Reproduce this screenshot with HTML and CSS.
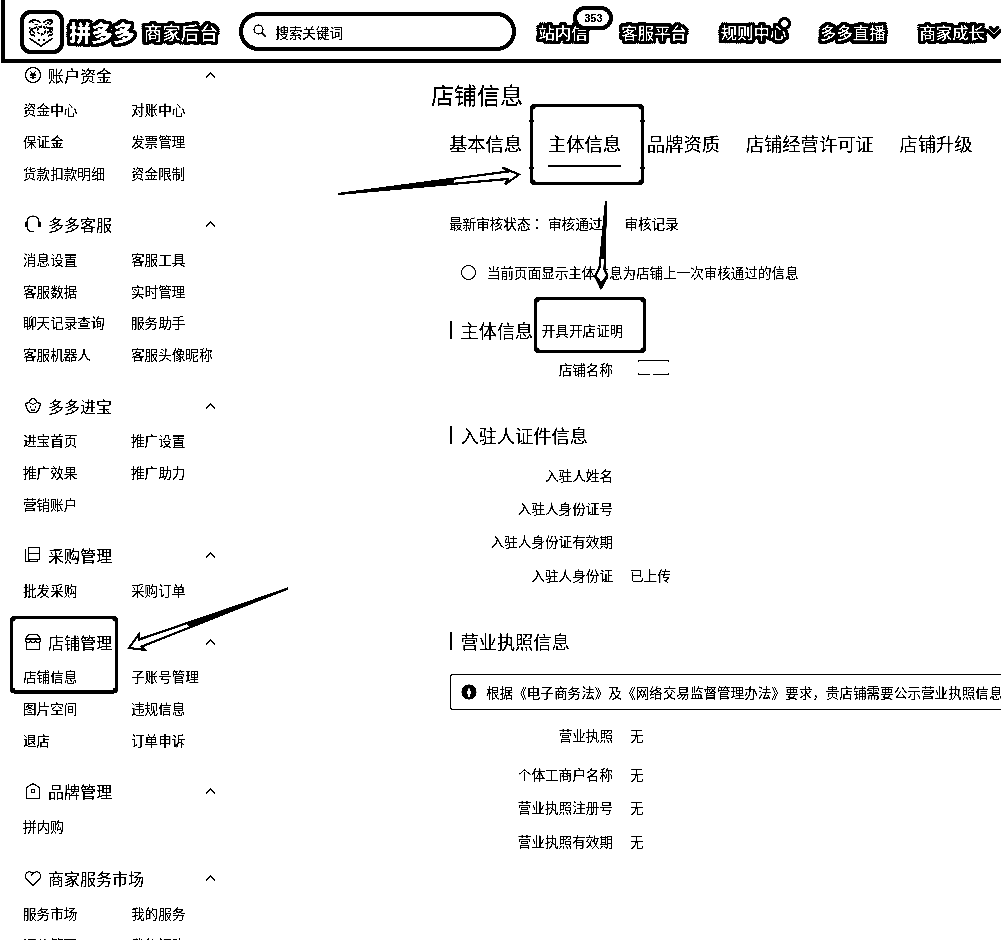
FILE: index.html
```html
<!DOCTYPE html>
<html lang="zh-CN">
<head>
<meta charset="utf-8">
<title>店铺信息</title>
<link rel="stylesheet" href="styles.css">
</head>
<body>
<div class="page">
  <header class="header">
    <svg class="logo" width="44" height="44" viewBox="0 0 44 44" fill="none" stroke="#000"><rect x="2" y="2" width="40" height="40" rx="9" stroke-width="4"/><path d="M9 13c2-4 8-4 12 0M23 13c3-4 8-4 10-1M10 20l7-3M26 17l7 3M9 28l12 8 12-8M10 24l5 2M33 24l-5 2M18 30h2M23 30h2" stroke-width="1.500"/><path d="M9 17l7 8M33 17l-7 8M16 14l4 3M27 14l-4 3M30 10v17M12 12l4 3M9 22h7M27 22h7M27 13h6" stroke-width="1.500" stroke-dasharray="2 1.5"/><circle cx="21.500" cy="20.500" r="4" stroke-width="1.800" stroke-dasharray="3 1"/></svg>
    <span class="brand outlined">拼多多</span>
    <span class="brand-sub outlined">商家后台</span>
    <div class="search">
      <svg width="14" height="14" viewBox="0 0 14 14" fill="none" stroke="#000"><circle cx="5.500" cy="5.500" r="4.500" stroke-width="1.100"/><path d="M9 9l4 4" stroke-width="1.200"/></svg>
      <span>搜索关键词</span>
    </div>
    <nav class="nav">
      <span class="nav-item"><span class="outlined">站内信</span><span class="badge">353</span></span>
      <span class="nav-item outlined">客服平台</span>
      <span class="nav-item"><span class="outlined">规则中心</span><span class="dot"></span></span>
      <span class="nav-item outlined">多多直播</span>
      <span class="nav-item nav-more"><span class="outlined">商家成长</span><svg width="16" height="14" viewBox="0 0 16 14" fill="none"><path d="M3 3l6 6 6-6" stroke="#000" stroke-width="7"/><path d="M3 3l6 6 6-6" stroke="#fff" stroke-width="1.500"/></svg></span>
    </nav>
  </header>

  <div class="body">
    <aside class="sidebar">
      <section class="group">
        <h2 class="group-title"><svg class="icon" viewBox="0 0 18 18"><circle cx="9" cy="9" r="7.500"/><path d="M6 5l3 3.500L12 5M9 8.500v5M6 9h6M6 11.500h6"/></svg><span>账户资金</span><svg class="caret" viewBox="0 0 10 6"><path d="M.5 5.500L5 1l4.500 4.500"/></svg></h2>
        <div class="links"><a>资金中心</a><a>对账中心</a><a>保证金</a><a>发票管理</a><a>货款扣款明细</a><a>资金限制</a></div>
      </section>
      <section class="group">
        <h2 class="group-title"><svg class="icon" viewBox="0 0 18 18"><path d="M3 7a6 6 0 0 1 12 0M3 7v5M15 7v5M3 12c1 3 2 4.500 4 4.500h3"/><path d="M2 7v5M16 7v5" stroke-width="2.200"/></svg><span>多多客服</span><svg class="caret" viewBox="0 0 10 6"><path d="M.5 5.500L5 1l4.500 4.500"/></svg></h2>
        <div class="links"><a>消息设置</a><a>客服工具</a><a>客服数据</a><a>实时管理</a><a>聊天记录查询</a><a>服务助手</a><a>客服机器人</a><a>客服头像昵称</a></div>
      </section>
      <section class="group">
        <h2 class="group-title"><svg class="icon" viewBox="0 0 18 18"><path d="M5 5.500L1.500 6.500L2.500 11L5.500 15.500H12.500L15.500 11L16.500 6.500L13 5.500L9 7.500zM5 5.500L6.500 2.500L9 1.500L11.500 2.500L13 5.500M6.500 9.500v1.500M11.500 9.500v1.500M7 12.500c1 .8 3 .8 4 0"/></svg><span>多多进宝</span><svg class="caret" viewBox="0 0 10 6"><path d="M.5 5.500L5 1l4.500 4.500"/></svg></h2>
        <div class="links"><a>进宝首页</a><a>推广设置</a><a>推广效果</a><a>推广助力</a><a>营销账户</a></div>
      </section>
      <section class="group">
        <h2 class="group-title"><svg class="icon" viewBox="0 0 18 18"><path d="M4.500 1.500h11v12h-11zM4.500 7.500h11M1.500 3v12.500H14M5 14v2M13.500 14v2"/></svg><span>采购管理</span><svg class="caret" viewBox="0 0 10 6"><path d="M.5 5.500L5 1l4.500 4.500"/></svg></h2>
        <div class="links"><a>批发采购</a><a>采购订单</a></div>
      </section>
      <section class="group">
        <h2 class="group-title"><svg class="icon" viewBox="0 0 18 18"><path d="M2.500 9v7.500h13V9M4.500 1.500h9l3 4.500v2l-1.500 1.500h-2L11.500 8 10 9.500H8L6.500 8 5 9.500H3L1.500 8V6zM1.500 6h15"/></svg><span>店铺管理</span><svg class="caret" viewBox="0 0 10 6"><path d="M.5 5.500L5 1l4.500 4.500"/></svg></h2>
        <div class="links"><a>店铺信息</a><a>子账号管理</a><a>图片空间</a><a>违规信息</a><a>退店</a><a>订单申诉</a></div>
      </section>
      <section class="group">
        <h2 class="group-title"><svg class="icon" viewBox="0 0 18 18"><path d="M2.500 16.500V5.500L9 1.500l6.500 4v11zM7.500 7.500h3v3h-3z"/></svg><span>品牌管理</span><svg class="caret" viewBox="0 0 10 6"><path d="M.5 5.500L5 1l4.500 4.500"/></svg></h2>
        <div class="links"><a>拼内购</a></div>
      </section>
      <section class="group">
        <h2 class="group-title"><svg class="icon" viewBox="0 0 18 18"><path d="M9 16.500L2.500 10C-.5 6 3.500 0 9 4.500C14.500 0 18.500 6 15.500 10zM9 4.500L7 6.500"/></svg><span>商家服务市场</span><svg class="caret" viewBox="0 0 10 6"><path d="M.5 5.500L5 1l4.500 4.500"/></svg></h2>
        <div class="links"><a>服务市场</a><a>我的服务</a><a>评价管理</a><a>我的订购</a></div>
      </section>
    </aside>

    <main class="main">
      <h1 class="title">店铺信息</h1>
      <div class="tabs">
        <span class="tab">基本信息</span>
        <span class="tab active">主体信息</span>
        <span class="tab">品牌资质</span>
        <span class="tab">店铺经营许可证</span>
        <span class="tab">店铺升级</span>
      </div>
      <div class="status"><span>最新审核状态<span class="colon" lang="zh-TW">：</span></span><span>审核通过</span><a class="record">审核记录</a></div>
      <div class="note"><span class="ring"></span><span>当前页面显示主体信息为店铺上一次审核通过的信息</span></div>

      <h2 class="section first">主体信息<a class="proof">开具开店证明</a></h2>
      <div class="row"><span class="label">店铺名称</span><svg class="masked" width="32" height="18" viewBox="0 0 32 18" fill="none" stroke="#000"><path d="M.5 3V1.500h30V3M.5 14v1.500H12M15 15.500h15.500V14"/></svg></div>

      <h2 class="section">入驻人证件信息</h2>
      <div class="row"><span class="label">入驻人姓名</span></div>
      <div class="row"><span class="label">入驻人身份证号</span></div>
      <div class="row"><span class="label">入驻人身份证有效期</span></div>
      <div class="row"><span class="label">入驻人身份证</span><span>已上传</span></div>

      <h2 class="section">营业执照信息</h2>
      <div class="notice"><svg width="16" height="16" viewBox="0 0 16 16"><circle cx="8" cy="8" r="7.500"/><path d="M8 3l1 2.500 1.500 3L9 10.500V13H7v-2.500L5.500 8.500l1.500-3z" fill="#fff"/></svg><span>根据《电子商务法》及《网络交易监督管理办法》要求，贵店铺需要公示营业执照信息</span></div>
      <div class="row tall"><span class="label">营业执照</span><span>无</span></div>
      <div class="row"><span class="label">个体工商户名称</span><span>无</span></div>
      <div class="row"><span class="label">营业执照注册号</span><span>无</span></div>
      <div class="row"><span class="label">营业执照有效期</span><span>无</span></div>
    </main>
  </div>

  <svg class="marks" width="1001" height="940" viewBox="0 0 1001 940">
    <g fill="none" stroke="#000" stroke-width="3">
      <rect x="531.500" y="105.500" width="111" height="78" rx="3"/>
      <rect x="535.500" y="298.500" width="109" height="53" rx="3"/>
      <rect x="11.500" y="617.500" width="105" height="74.500" rx="3"/>
    </g>
    <g fill="none" stroke="#000" stroke-width="5" stroke-linecap="round">
      <path d="M533 107h0M641 107h0M533 182h0M641 182h0M537 300h0M643 300h0M537 350h0M643 350h0M13 619h0M115 619h0M13 690.500h0M115 690.500h0"/>
    </g>
    <g fill="none" stroke="#000" stroke-width="2">
      <path d="M529 121h5M529 168h5M640 121h5M640 168h5"/>
    </g>
    <g fill="#fff" stroke="#000" stroke-width="2">
      <path d="M338 194L508 171.500L502.500 167.500L519 174.500L505 184.500L508 179L338 194z"/>
      <path d="M606 201L599.500 268L595 276L601 288L607.500 276L604.500 270z"/>
      <path d="M288 588.500L139 639.500V634L129 648L145 650L141.500 646.500z"/>
    </g>
    <g stroke="#000" stroke-width="1">
      <path d="M338 194L453 178.500V182.500z"/>
      <path d="M606 201L600.500 258H604.500z"/>
      <path d="M595.500 275L601 282L606.500 276L601 289z"/>
      <path d="M288 588.500L187 623L190 627.500z"/>
    </g>
  </svg>
</div>
</body>
</html>
```

FILE: styles.css
```css
* { box-sizing: border-box; }
body { margin: 0; background: #fff; }
.page {
  position: relative;
  width: 1001px;
  height: 940px;
  overflow: hidden;
  background: #fff;
  color: #000;
  font: 13.6px/30px "Noto Sans CJK SC", sans-serif;
  filter: grayscale(1) brightness(0.85) contrast(12);
}
h1, h2 { margin: 0; font-weight: 400; }
svg { flex: none; }

.header {
  position: relative;
  z-index: 1;
  display: flex;
  align-items: center;
  height: 63px;
  margin-left: 1px;
  padding: 1px 0 0 15px;
  border-left: 4px solid #000;
  border-bottom: 4px solid #000;
  background: #fff;
  white-space: nowrap;
}
.logo { margin-top: 3px; }
.outlined {
  color: #fff;
  text-shadow:
    3px 0 #000, -3px 0 #000, 0 3px #000, 0 -3px #000,
    3px 2px #000, -3px 2px #000, 3px -2px #000, -3px -2px #000,
    2px 3px #000, -2px 3px #000, 2px -3px #000, -2px -3px #000,
    1px 1px #000, -1px 1px #000, 1px -1px #000, -1px -1px #000,
    2px 0 #000, -2px 0 #000, 0 2px #000, 0 -2px #000;
}
.brand { margin: 1px 0 0 5px; width: 75px; font-size: 22px; font-weight: 900; }
.brand-sub { margin-top: 3px; width: 96px; font-size: 18.6px; font-weight: 500; }
.search {
  display: flex;
  align-items: center;
  width: 278px;
  height: 39px;
  margin-top: 3px;
  padding-left: 10px;
  gap: 8px;
  border: 4px solid #000;
  border-radius: 20px;
}
.search svg { margin-bottom: 2px; }
.nav {
  display: flex;
  gap: 33.8px;
  margin: 4px 0 0 22.6px;
  font-size: 16.4px;
  font-weight: 500;
}
.nav-item { position: relative; flex: none; }
.nav-more { display: flex; align-items: center; }
.badge {
  position: absolute;
  left: 35px;
  top: -11px;
  width: 40px;
  height: 24px;
  border: 4px solid #000;
  border-radius: 12px;
  background: #fff;
  font: 700 11px/17px "Liberation Sans", sans-serif;
  text-align: center;
}
.dot {
  position: absolute;
  right: -5px;
  top: 0;
  width: 13px;
  height: 13px;
  border: 3px solid #000;
  border-radius: 50%;
  background: #fff;
}

.body { display: flex; }
.sidebar { width: 431px; margin-top: -8px; padding-left: 23px; }
.group { width: 200px; margin-bottom: 15.5px; }
.group-title {
  display: flex;
  align-items: center;
  height: 39.4px;
  padding-left: 1px;
  font-size: 16px;
}
.icon { width: 18px; height: 18px; margin-right: 6px; fill: none; stroke: #000; stroke-width: 1.1; }
.caret { width: 11px; height: 6px; margin: 0 7px 0 auto; fill: none; stroke: #000; stroke-width: 1.5; }
.links { display: grid; grid-template-columns: 108px 92px; }
.links a { height: 31.6px; line-height: 31.6px; white-space: nowrap; }

.main { width: 570px; margin-top: -1px; white-space: nowrap; }
.title { height: 64px; font-size: 23px; line-height: 64px; }
.tabs { display: flex; padding-left: 18px; font-size: 18.3px; line-height: 34px; }
.tab { margin-right: 25.8px; padding-bottom: 5px; border-bottom: 2px solid transparent; }
.tab.active { border-color: #000; }
.status { display: flex; margin-top: 41px; padding-left: 18px; }
.status > span:first-child { width: 99px; }
.colon { font-family: "Noto Sans CJK TC", sans-serif; }
.record { margin-left: 22px; }
.note { display: flex; align-items: center; margin-top: 19px; padding-left: 30px; gap: 11px; }
.note span:last-child { font-size: 13.55px; }
.ring { width: 15px; height: 15px; border: 1.5px solid #000; border-radius: 50%; }
.section {
  display: flex;
  align-items: center;
  height: 30px;
  margin: 34.5px 0 8px 19px;
  font-size: 18.2px;
}
.section::before { content: ""; width: 2px; height: 18px; margin-right: 8.5px; background: #000; }
.section.first { margin-top: 28px; margin-bottom: 7px; }
.proof { margin-left: 8.5px; font-size: 13.6px; }
.row { display: flex; align-items: center; height: 33.4px; gap: 17px; }
.row.tall { height: 39px; margin: 5.3px 0 3px; }
.label { width: 182px; text-align: right; }
.masked { margin-left: 8px; margin-top: -2px; }
.notice {
  display: flex;
  align-items: center;
  height: 36px;
  margin: 18px 0 0 19px;
  padding-left: 10px;
  gap: 9px;
  border: 1px solid #000;
  border-right: 0;
  border-radius: 3px 0 0 3px;
  overflow: hidden;
}

/* hand-drawn highlights laid over the page */
.marks { position: absolute; left: 0; top: 0; z-index: 2; }
```
